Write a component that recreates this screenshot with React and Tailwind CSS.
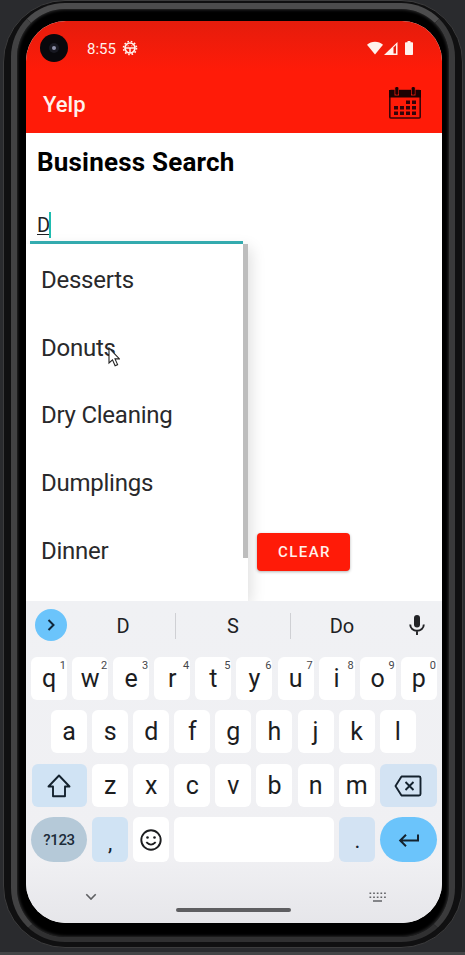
import React from "react";

const items = ["Desserts", "Donuts", "Dry Cleaning", "Dumplings", "Dinner"];
const row1 = ["q", "w", "e", "r", "t", "y", "u", "i", "o", "p"];
const row2 = ["a", "s", "d", "f", "g", "h", "j", "k", "l"];
const row3 = ["z", "x", "c", "v", "b", "n", "m"];

function StatusBar() {
  return (
    <div className="flex h-[54px] items-center pl-[14px] pr-[29px] text-[#fff1ec]">
      <div className="flex size-7 items-center justify-center rounded-full bg-[#08080c]">
        <div className="flex size-[10px] items-center justify-center rounded-full bg-[#171821]">
          <div className="size-1 rounded-full bg-[#8f92aa]" />
        </div>
      </div>
      <span className="ml-[19px] mt-[2px] w-[35px] text-[15px] leading-none">8:55</span>
      <svg className="size-4" viewBox="0 0 16 16" fill="none" stroke="currentColor">
        <circle cx="8" cy="8" r="6.500" strokeWidth="1.600" strokeDasharray="1.600 1.803" />
        <circle cx="8" cy="8" r="5" strokeWidth="1.700" />
        <path d="M3 8H13M8 8V13" strokeWidth="1.500" />
        <path d="M5.600 5.800h1M9.400 5.800h1" strokeWidth="1" />
      </svg>
      <div className="ml-auto flex items-center">
        <svg className="h-[14px] w-4" viewBox="0 0 16 14" fill="currentColor">
          <path d="M0 3.800C2.200 1.900 4.900.8 8 .8s5.800 1.100 8 3L8 13.500z" />
        </svg>
        <svg className="ml-px h-[14px] w-[14px]" viewBox="0 0 14 14">
          <path d="M0 14 13.500 1V14z" fill="currentColor" />
          <path d="M9.500 6.500 12 4.100V12.500H9.500z" fill="#e8200f" />
        </svg>
        <svg className="ml-[7px] h-[14px] w-2" viewBox="0 0 8 14" fill="currentColor">
          <path d="M2.500 0h3v1.200H7.200q.8 0 .8.800V13.200q0 .8-.8.800H.8Q0 14 0 13.200V2q0-.8.8-.8H2.500z" />
        </svg>
      </div>
    </div>
  );
}

function CalendarIcon() {
  return (
    <svg className="h-8 w-8" viewBox="0 0 32 32">
      <rect x=".8" y="3.500" width="30.400" height="27.500" rx="1" fill="none" stroke="#3a0508" strokeWidth="1.600" />
      <path d="M0 3h32v7.500H0z" fill="#1c0203" />
      <path d="M5.500 0h4.500v8.500H5.500zM22 0h4.500v8.500H22z" fill="#d91a0c" />
      <rect x="6.300" y="0" width="3" height="7.800" rx="1.300" fill="#1c0203" />
      <rect x="22.800" y="0" width="3" height="7.800" rx="1.300" fill="#1c0203" />
      <g fill="#33040a">
        <path d="M17 13.500h4v3.500h-4zM23 13.500h4v3.500h-4z" />
        <path d="M5 19h4v3.500H5zM11 19h4v3.500h-4zM17 19h4v3.500h-4zM23 19h4v3.500h-4z" />
        <path d="M5 24.500h4V28H5zM11 24.500h4V28h-4zM17 24.500h4V28h-4zM23 24.500h4V28h-4z" />
      </g>
    </svg>
  );
}

function Key({ children, hint }) {
  return (
    <div className="relative flex h-[43px] w-9 shrink-0 items-center justify-center rounded-md bg-white text-[25px] leading-none text-[#1c1d1f]">
      <span className="-mt-px">{children}</span>
      {hint && <span className="absolute right-[1px] top-[3px] text-[11px] leading-none text-[#45464a]">{hint}</span>}
    </div>
  );
}

function Keyboard() {
  return (
    <div className="flex h-[322px] flex-col bg-linear-to-b from-[#f0f1f4] via-[#f0f0f3] via-80% to-[#e6e6ea]">
      <div className="flex h-[49px] shrink-0 items-center pl-[9px] text-[20px] text-[#202124]">
        <div className="-mt-px flex size-[32px] items-center justify-center rounded-full bg-[#6bc4fb]">
          <svg className="size-4" viewBox="0 0 16 16" fill="none" stroke="#10273a" strokeWidth="2">
            <path d="m5.500 3 5 5-5 5" />
          </svg>
        </div>
        <span className="ml-[3px] w-[105px] pl-px pt-px text-center">D</span>
        <div className="h-[26px] w-px bg-[#cfd0d4]" />
        <span className="w-[114px] pt-px text-center">S</span>
        <div className="h-[26px] w-px bg-[#cfd0d4]" />
        <span className="w-[102px] pt-px text-center">Do</span>
        <svg className="-mt-px ml-[16px] h-[22px] w-4" viewBox="0 0 16 22">
          <rect x="5" y="1" width="6" height="12.500" rx="3" fill="#222326" />
          <path d="M1.200 10.500a6.800 6.300 0 0 0 13.600 0M8 16.500V21" fill="none" stroke="#222326" strokeWidth="1.900" />
        </svg>
      </div>
      <div className="mt-[7px] flex h-[43px] gap-[5.100px] pl-[5px]">
        {row1.map((k, i) => (
          <Key key={k} hint={String((i + 1) % 10)}>{k}</Key>
        ))}
      </div>
      <div className="mt-[10px] flex h-[43px] gap-[5.100px] pl-[25px]">
        {row2.map((k) => <Key key={k}>{k}</Key>)}
      </div>
      <div className="mt-[11px] flex h-[43px] gap-[5.100px] pl-[6px]">
        <div className="flex w-[55px] items-center justify-center rounded-md bg-[#d0e3f4]">
          <svg className="-ml-[2px] h-6 w-[26px]" viewBox="0 0 26 24" fill="none" stroke="#14222e" strokeWidth="1.900" strokeLinejoin="round">
            <path d="M13 1.500 23.500 12.500h-4.500V22.200H7V12.500H2.500z" />
          </svg>
        </div>
        {row3.map((k) => <Key key={k}>{k}</Key>)}
        <div className="flex w-[57px] items-center justify-center rounded-md bg-[#d3e3f3]">
          <svg className="mt-px h-[22px] w-7" viewBox="0 0 28 22" fill="none" stroke="#14222e" strokeWidth="1.900" strokeLinejoin="round">
            <path d="M7.500 1.500H25q1.500 0 1.500 1.500V19q0 1.500-1.500 1.500H7.500L1.500 11zM11.500 7l8 8M19.500 7l-8 8" />
          </svg>
        </div>
      </div>
      <div className="mt-[10px] flex h-[45px] gap-[5.100px] pl-[5px]">
        <div className="flex w-14 items-center justify-center rounded-[24px] bg-[#b5c9d8] pt-px text-[15px] font-medium tracking-[-0.300px] text-[#1c2b38]">?123</div>
        <div className="flex w-9 items-end justify-center rounded-md bg-[#d0e3f4] pb-[8px] text-[22px] leading-none text-[#14222e]">,</div>
        <div className="flex w-9 items-center justify-center rounded-md bg-white">
          <svg className="size-[22px]" viewBox="0 0 22 22" fill="none" stroke="#1c1d1f" strokeWidth="1.900">
            <circle cx="11" cy="11" r="9.700" />
            <path d="M6.300 13.200q4.700 4.800 9.400 0" />
            <circle cx="7.500" cy="8.500" r="1.300" fill="#1c1d1f" stroke="none" />
            <circle cx="14.500" cy="8.500" r="1.300" fill="#1c1d1f" stroke="none" />
          </svg>
        </div>
        <div className="w-[160px] rounded-md bg-white" />
        <div className="flex w-9 items-end justify-center rounded-md bg-[#d3e3f3] pb-[10px] text-[22px] leading-none text-[#14222e]">.</div>
        <div className="flex w-[57px] items-center justify-center rounded-[24px] bg-[#6bc4fb]">
          <svg className="mt-px h-[14px] w-[22px]" viewBox="0 0 22 14" fill="none" stroke="#14222e" strokeWidth="2">
            <path d="M20 1.500V7.500H2.500M8 1.700 2.200 7.500 8 13.200" />
          </svg>
        </div>
      </div>
      <div className="flex h-[61px] items-center pl-[59px] pt-[9px]">
        <svg className="h-[8px] w-3" viewBox="0 0 12 8" fill="none" stroke="#5f6063" strokeWidth="1.600">
          <path d="m1.300 1.300 4.700 4.700 4.700-4.700" />
        </svg>
        <div className="ml-[79px] mt-[26px] h-1 w-[115px] rounded-full bg-[#5e5e61]" />
        <svg className="ml-[78px] h-[10px] w-[17px]" viewBox="0 0 17 10" fill="none" stroke="#626367" strokeWidth="1.500">
          <path d="M.5 1.200H17M.5 5.200H17" strokeDasharray="1.700 1.950" />
          <path d="M4 8.900h9" />
        </svg>
      </div>
    </div>
  );
}

export default function App() {
  return (
    <div className="h-[955px] w-[465px] overflow-hidden border-b-[3px] border-[#434446] bg-[#2a2b2e] pl-[3px] font-[Roboto,sans-serif]">
      <div className="h-[948px] w-[460px] rounded-[62px] border border-[#3c3c3d] bg-[#101011] px-[7px] pb-[5px] pt-[2px]">
        <div className="h-full rounded-[54px] border-x-[6px] border-b-[5px] border-t-[6px] border-b-[#303031] border-l-[#424243] border-r-[#3a3a3b] border-t-[#4c4c4d] bg-black px-[9px] pb-[13px] pt-[12px] shadow-[inset_0_0_3px_1px_#2a2a2b]">
          <div className="relative flex h-[902px] w-[416px] flex-col overflow-hidden rounded-[40px] bg-white">
            <div className="h-28 shrink-0 bg-linear-to-b from-[#e51c0c] to-[#ff1b08] to-45%">
              <StatusBar />
              <div className="flex h-14 items-center justify-between pl-[17px] pr-[21px]">
                <span className="pt-[2px] text-[22px] font-medium text-[#fff1ec]">Yelp</span>
                <CalendarIcon />
              </div>
            </div>
            <h1 className="h-[61px] shrink-0 pl-[11px] pt-[10px] text-[26px] font-bold leading-[38px] tracking-[0.200px] text-black">Business Search</h1>
            <div className="ml-1 flex h-[50px] w-[213px] shrink-0 items-end border-b-[3px] border-[#35b0b4] pb-[3px] pl-[7px] text-[20px] text-[#202124]">
              <span className="-mb-px w-[12px] leading-[27px] underline decoration-1 underline-offset-2">D</span>
              <div className="h-[26px] w-[2px] bg-[#1fbcb0]" />
            </div>
            <div className="flex h-[357px] shrink-0">
              <div className="flex w-[222px] justify-between shadow-[3px_4px_14px_rgba(0,0,0,0.13)]">
                <ul className="pl-[15px] pt-[2px] text-[24px] tracking-[-0.250px] text-[#29292b]">
                  {items.map((t) => (
                    <li key={t} className="flex h-[67.800px] items-center whitespace-nowrap">{t}</li>
                  ))}
                </ul>
                <div className="h-[314px] w-[5px] bg-[#bdbdbd]" />
              </div>
              <button className="ml-[9px] mt-[289px] h-[38px] w-[93px] rounded-[4px] bg-[#ff1b08] pl-[2px] pt-px text-[15px] font-medium tracking-[1.400px] text-[#fff1ec] shadow-[0_1px_3px_rgba(0,0,0,0.3)]">CLEAR</button>
            </div>
            <div className="z-10"><Keyboard /></div>
            <svg className="absolute left-[82px] top-[326px] h-5 w-3" viewBox="0 0 12 20">
              <path d="M1 1v15l3.500-3.200 2.600 5.900 2.500-1.100-2.600-5.700h4.500z" fill="#fff" stroke="#222" strokeWidth="1.100" />
            </svg>
          </div>
        </div>
      </div>
    </div>
  );
}
